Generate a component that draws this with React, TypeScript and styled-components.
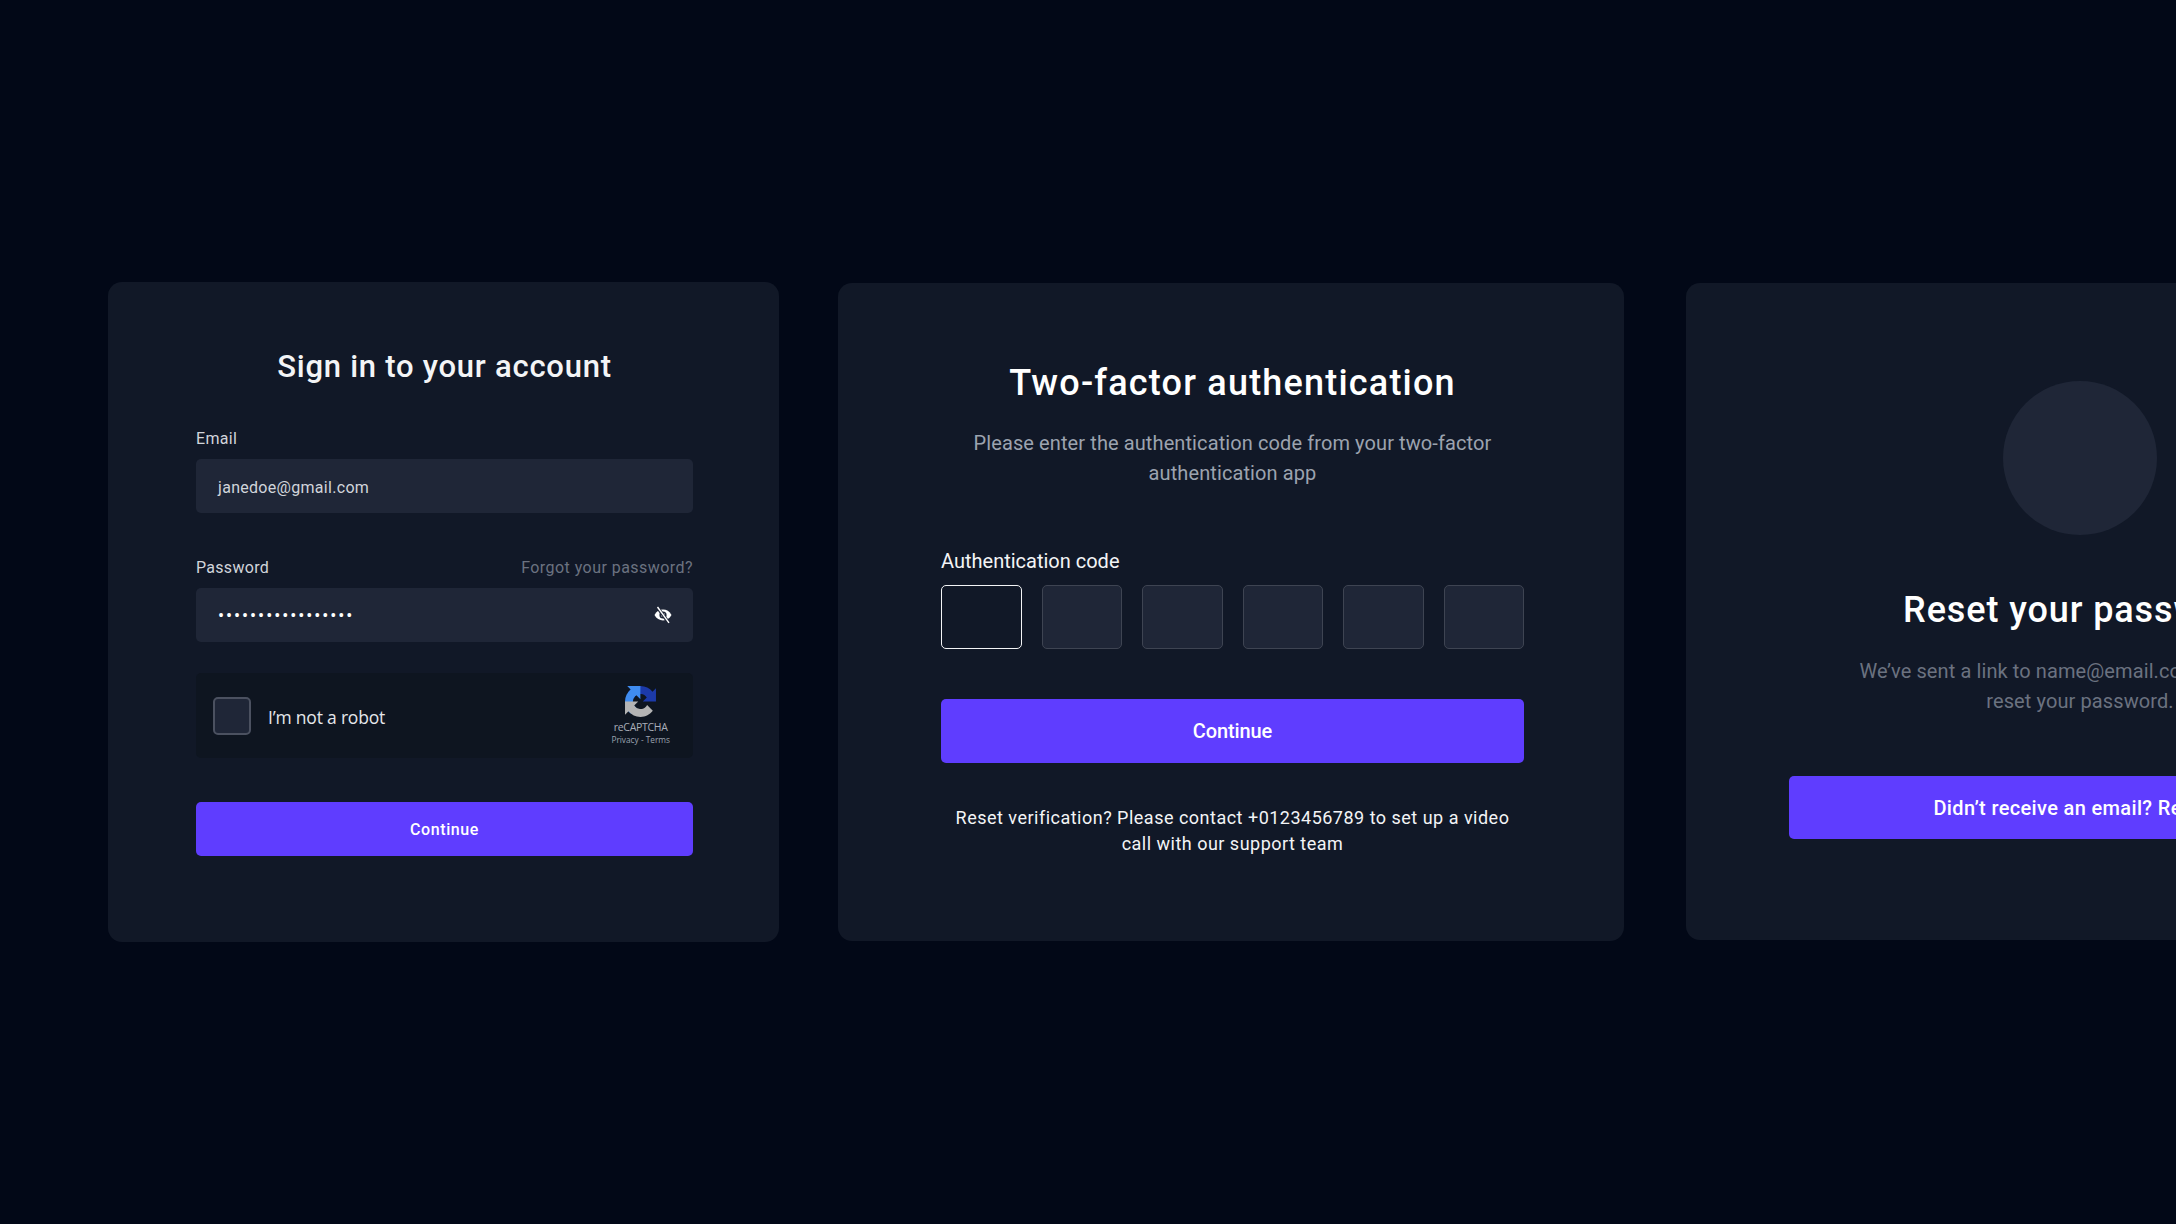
import React from 'react'
import styled, { createGlobalStyle } from 'styled-components'

const GlobalStyle = createGlobalStyle`
  html, body {
    margin: 0;
    padding: 0;
    background: #020817;
  }
  * {
    box-sizing: border-box;
  }
`

const Page = styled.div`
  width: 2176px;
  height: 1224px;
  overflow: hidden;
  display: flex;
  align-items: flex-start;
  padding: 282px 0 0 108px;
  background: #020817;
  font-family: Roboto, 'Liberation Sans', sans-serif;
  color: #fff;
`

const Card = styled.section<{ $width: number; $height: number; $top: number; $left: number; $pad: number; $padRight: number; $padTop: number }>`
  flex: none;
  width: ${(p) => p.$width}px;
  height: ${(p) => p.$height}px;
  margin: ${(p) => p.$top}px 0 0 ${(p) => p.$left}px;
  padding: ${(p) => p.$padTop}px ${(p) => p.$padRight}px 0 ${(p) => p.$pad}px;
  display: flex;
  flex-direction: column;
  background: #111827;
  border-radius: 14px;
`

const SmallTitle = styled.h1`
  margin: 0 0 40px;
  font-size: 31px;
  line-height: 40px;
  font-weight: 500;
  letter-spacing: 0.75px;
  text-align: center;
  color: #f3f4f6;
`

const LargeTitle = styled.h1<{ $space?: number; $tracking: number }>`
  margin: ${(p) => p.$space ?? 0}px 0 0;
  font-size: 36px;
  line-height: 48px;
  font-weight: 500;
  letter-spacing: ${(p) => p.$tracking}px;
  text-align: center;
  white-space: nowrap;
`

const LabelRow = styled.div`
  display: flex;
  justify-content: space-between;
  margin-bottom: 9px;
`

const FieldLabel = styled.label`
  font-size: 16px;
  line-height: 23px;
  letter-spacing: 0.3px;
  color: #d1d5db;
`

const ForgotLink = styled.a`
  font-size: 16px;
  line-height: 23px;
  letter-spacing: 0.45px;
  color: #6b7280;
`

const InputBox = styled.div<{ $space?: number; $nudge?: number }>`
  height: 54px;
  margin-bottom: ${(p) => p.$space ?? 0}px;
  padding: ${(p) => p.$nudge ?? 0}px 21px 0 22px;
  display: flex;
  align-items: center;
  justify-content: space-between;
  background: #1f2637;
  border-radius: 5px;
  font-size: 16px;
  letter-spacing: 0.3px;
  color: #d1d5db;
`

const Dots = styled.span`
  font-size: 18px;
  letter-spacing: 1.95px;
  color: #fff;
`

const Captcha = styled.div`
  height: 85px;
  margin: 31px 0 44px;
  padding: 0 17px;
  display: flex;
  align-items: center;
  background: #0e1520;
  border-radius: 5px;
`

const Checkbox = styled.span`
  width: 38px;
  height: 38px;
  flex: none;
  background: #1f2637;
  border: 2px solid #4b5160;
  border-radius: 5px;
`

const RobotText = styled.span`
  margin: 2px 0 0 17px;
  font-family: 'Open Sans', sans-serif;
  font-size: 17.5px;
  letter-spacing: -0.2px;
  color: #e5e7eb;
`

const Badge = styled.div`
  margin-left: auto;
  margin-right: 6px;
  display: flex;
  flex-direction: column;
  align-items: center;
  color: #9ca3af;
`

const BadgeName = styled.span`
  margin-top: 3px;
  font-family: 'Open Sans', sans-serif;
  font-size: 10.5px;
  line-height: 14px;
  letter-spacing: -0.3px;
  color: #a9aeb8;
`

const BadgeLinks = styled.span`
  font-family: 'Open Sans', sans-serif;
  font-size: 8.3px;
  line-height: 12px;
`

const PrimaryButton = styled.button<{ $height: number; $size: number; $tracking: number; $space?: number }>`
  flex: none;
  width: 100%;
  height: ${(p) => p.$height}px;
  margin-top: ${(p) => p.$space ?? 0}px;
  border: 0;
  border-radius: 5px;
  background: #5f3dff;
  color: #fff;
  font-family: inherit;
  font-size: ${(p) => p.$size}px;
  font-weight: 500;
  letter-spacing: ${(p) => p.$tracking}px;
  white-space: nowrap;
  text-align: center;
`

const Description = styled.p<{ $color: string; $space: number }>`
  margin: ${(p) => p.$space}px 0 0;
  font-size: 20px;
  line-height: 30px;
  letter-spacing: 0.1px;
  text-align: center;
  white-space: nowrap;
  color: ${(p) => p.$color};
`

const CodeLabel = styled.label`
  margin: 60px 0 11px;
  font-size: 20px;
  line-height: 26px;
  color: #f3f4f6;
`

const CodeGrid = styled.div`
  display: grid;
  grid-template-columns: repeat(6, 1fr);
  gap: 20px;
`

const CodeBox = styled.span<{ $active?: boolean }>`
  height: 64px;
  border-radius: 5px;
  background: ${(p) => (p.$active ? '#111827' : '#1f2637')};
  border: 1px solid ${(p) => (p.$active ? '#f3f4f6' : '#3e4452')};
`

const SupportNote = styled.p`
  margin: 42px 0 0;
  font-size: 18px;
  line-height: 25.5px;
  letter-spacing: 0.49px;
  text-align: center;
  color: #f3f4f6;
`

const Circle = styled.div`
  width: 154px;
  height: 154px;
  flex: none;
  align-self: center;
  border-radius: 50%;
  background: #1f2637;
`

const EyeOffIcon = () => (
  <svg width='18' height='18' viewBox='0 0 18 18' fill='none'>
    <path d='M0.5 9C2.5 5.3 5.5 3.6 9 3.6s6.5 1.7 8.500 5.400c-2 3.700-5 5.400-8.500 5.400S2.500 12.700 0.500 9z' fill='#fff' />
    <circle cx='9' cy='9' r='3.600' fill='#1f2637' />
    <circle cx='9' cy='9' r='2' fill='#fff' />
    <path d='M3.500 1.500 14.500 16.500' stroke='#1f2637' strokeWidth='3.200' />
    <path d='M3.500 1 15 16.800' stroke='#fff' strokeWidth='1.400' />
  </svg>
)

const RecaptchaLogo = () => (
  <svg width='31' height='31' viewBox='0 0 64 64'>
    <path
      d='M64 31.955l-.033-1.37V4.687l-7.16 7.16C50.948 4.674 42.033.093 32.05.093c-10.400 0-19.622 4.960-25.458 12.640l11.736 11.860a15.550 15.550 0 0 1 4.754-5.334c2.050-1.600 4.952-2.906 8.968-2.906.485 0 .860.057 1.135.163 4.976.393 9.288 3.140 11.828 7.124l-8.307 8.307c10.522-.040 22.400-.066 27.295.005'
      fill='#1c3aa9'
    />
    <path
      d='M31.862.094l-1.370.033H4.594l7.160 7.160C4.580 13.147 0 22.060 0 32.046c0 10.400 4.960 19.622 12.640 25.458l11.860-11.736a15.550 15.550 0 0 1-5.334-4.754c-1.600-2.050-2.906-4.952-2.906-8.968 0-.485.057-.860.163-1.135.393-4.976 3.140-9.288 7.124-11.828l8.307 8.307c-.040-10.522-.066-22.400.005-27.295'
      fill='#3f8cf0'
    />
    <path
      d='M.001 32.045l.033 1.370v25.898l7.160-7.160c5.860 7.173 14.774 11.754 24.760 11.754 10.400 0 19.622-4.960 25.458-12.640L45.677 39.407a15.550 15.550 0 0 1-4.754 5.334c-2.050 1.600-4.952 2.906-8.968 2.906-.485 0-.860-.057-1.135-.163-4.976-.393-9.288-3.140-11.828-7.124l8.307-8.307c-10.522.040-22.400.066-27.295-.005'
      fill='#b4b4b4'
    />
  </svg>
)

const codeSlots = [0, 1, 2, 3, 4, 5]

const App: React.FC = () => {
  return (
    <Page>
      <GlobalStyle />
      <Card $width={671} $height={660} $top={0} $left={0} $pad={88} $padRight={86} $padTop={65}>
        <SmallTitle>Sign in to your account</SmallTitle>
        <LabelRow>
          <FieldLabel>Email</FieldLabel>
        </LabelRow>
        <InputBox $space={43} $nudge={2}>janedoe@gmail.com</InputBox>
        <LabelRow>
          <FieldLabel>Password</FieldLabel>
          <ForgotLink>Forgot your password?</ForgotLink>
        </LabelRow>
        <InputBox>
          <Dots>•••••••••••••••••</Dots>
          <EyeOffIcon />
        </InputBox>
        <Captcha>
          <Checkbox />
          <RobotText>I’m not a robot</RobotText>
          <Badge>
            <RecaptchaLogo />
            <BadgeName>reCAPTCHA</BadgeName>
            <BadgeLinks>Privacy - Terms</BadgeLinks>
          </Badge>
        </Captcha>
        <PrimaryButton $height={54} $size={16} $tracking={0.6}>Continue</PrimaryButton>
      </Card>

      <Card $width={786} $height={658} $top={1} $left={59} $pad={103} $padRight={100} $padTop={76}>
        <LargeTitle $tracking={1.2}>Two-factor authentication</LargeTitle>
        <Description $color='#9ca3af' $space={21}>
          Please enter the authentication code from your two-factor
          <br />
          authentication app
        </Description>
        <CodeLabel>Authentication code</CodeLabel>
        <CodeGrid>
          {codeSlots.map((slot) => (
            <CodeBox key={slot} $active={slot === 0} />
          ))}
        </CodeGrid>
        <PrimaryButton $height={64} $size={20} $tracking={-0.1} $space={50}>Continue</PrimaryButton>
        <SupportNote>
          Reset verification? Please contact +0123456789 to set up a video
          <br />
          call with our support team
        </SupportNote>
      </Card>

      <Card $width={788} $height={657} $top={1} $left={62} $pad={103} $padRight={103} $padTop={98}>
        <Circle />
        <LargeTitle $space={51} $tracking={0.9}>Reset your password</LargeTitle>
        <Description $color='#6b7280' $space={22}>
          We’ve sent a link to name@email.com so you can
          <br />
          reset your password.
        </Description>
        <PrimaryButton $height={63} $size={20} $tracking={0.35} $space={60}>Didn’t receive an email? Resend</PrimaryButton>
      </Card>
    </Page>
  )
}

export default App
